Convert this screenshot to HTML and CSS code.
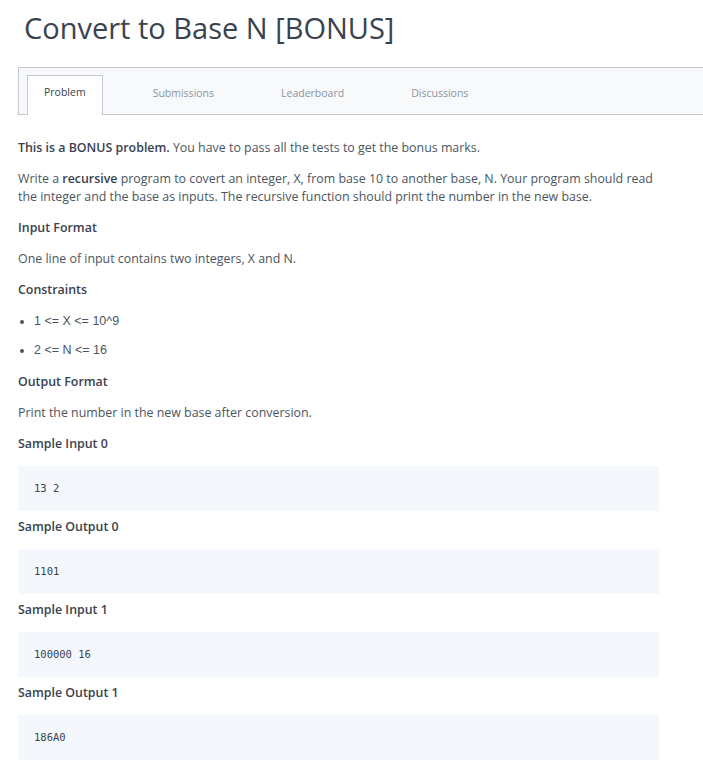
FILE: index.html
```html
<!DOCTYPE html>
<html>
<head>
<meta charset="utf-8">
<link rel="stylesheet" href="styles.css">
</head>
<body>
<h1 class="title">Convert to Base N [BONUS]</h1>
<nav class="tabs">
  <a class="tab active">Problem</a>
  <a class="tab">Submissions</a>
  <a class="tab">Leaderboard</a>
  <a class="tab">Discussions</a>
</nav>
<main class="content">
  <p><strong>This is a BONUS problem.</strong> You have to pass all the tests to get the bonus marks.</p>
  <p>Write a <strong>recursive</strong> program to covert an integer, X, from base 10 to another base, N. Your program should read the integer and the base as inputs. The recursive function should print the number in the new base.</p>
  <p class="heading">Input Format</p>
  <p>One line of input contains two integers, X and N.</p>
  <p class="heading">Constraints</p>
  <ul class="list">
    <li>1 &lt;= X &lt;= 10^9</li>
    <li>2 &lt;= N &lt;= 16</li>
  </ul>
  <p class="heading">Output Format</p>
  <p>Print the number in the new base after conversion.</p>
  <p class="heading">Sample Input 0</p>
  <pre class="code">13 2</pre>
  <p class="heading">Sample Output 0</p>
  <pre class="code">1101</pre>
  <p class="heading">Sample Input 1</p>
  <pre class="code">100000 16</pre>
  <p class="heading">Sample Output 1</p>
  <pre class="code">186A0</pre>
</main>
</body>
</html>
```
FILE: styles.css
```css
html, body {
  margin: 0;
  padding: 0;
  background: #ffffff;
  overflow: hidden;
}
body {
  font-family: "Open Sans", "DejaVu Sans", sans-serif;
  color: #39424e;
}
.title {
  margin: 10px 0 0 24px;
  font-size: 29px;
  line-height: 36px;
  font-weight: 400;
  color: #39424e;
}
.tabs {
  margin: 21px 0 0 18px;
  display: flex;
  align-items: flex-end;
  background: #f8f9fa;
  border: 1px solid #c2c7d0;
  border-right: none;
  padding: 8px 0 0 8px;
  height: 38px;
}
.tab {
  display: block;
  padding: 8px 16px 14px;
  margin-right: 33px;
  font-size: 10.5px;
  line-height: 16px;
  color: #8a94a1;
  border: 1px solid transparent;
  border-bottom: none;
  margin-bottom: -1px;
  height: 16px;
}
.tab.active {
  background: #ffffff;
  border-color: #c2c7d0;
  color: #39424e;
  height: 17px;
  padding-bottom: 14px;
}
.content {
  margin: 24px 0 0 18px;
  width: 641px;
  font-size: 12.4px;
  line-height: 18px;
  color: #4b5561;
}
.content p {
  margin: 0 0 13px;
}
.content strong {
  font-weight: 600;
  color: #39424e;
}
.content .heading {
  font-weight: 600;
  color: #39424e;
}
.list {
  margin: 0 0 14px;
  padding: 0 0 0 16px;
  font-family: "Liberation Sans", Arial, sans-serif;
  font-size: 12.5px;
  color: #4b5561;
}
.list li + li {
  margin-top: 11px;
}
.code {
  margin: 0 0 7px;
  padding: 16px;
  background: #f4f8fd;
  font-family: "DejaVu Sans Mono", monospace;
  font-size: 10.5px;
  line-height: 13px;
  color: #39424e;
}
```
